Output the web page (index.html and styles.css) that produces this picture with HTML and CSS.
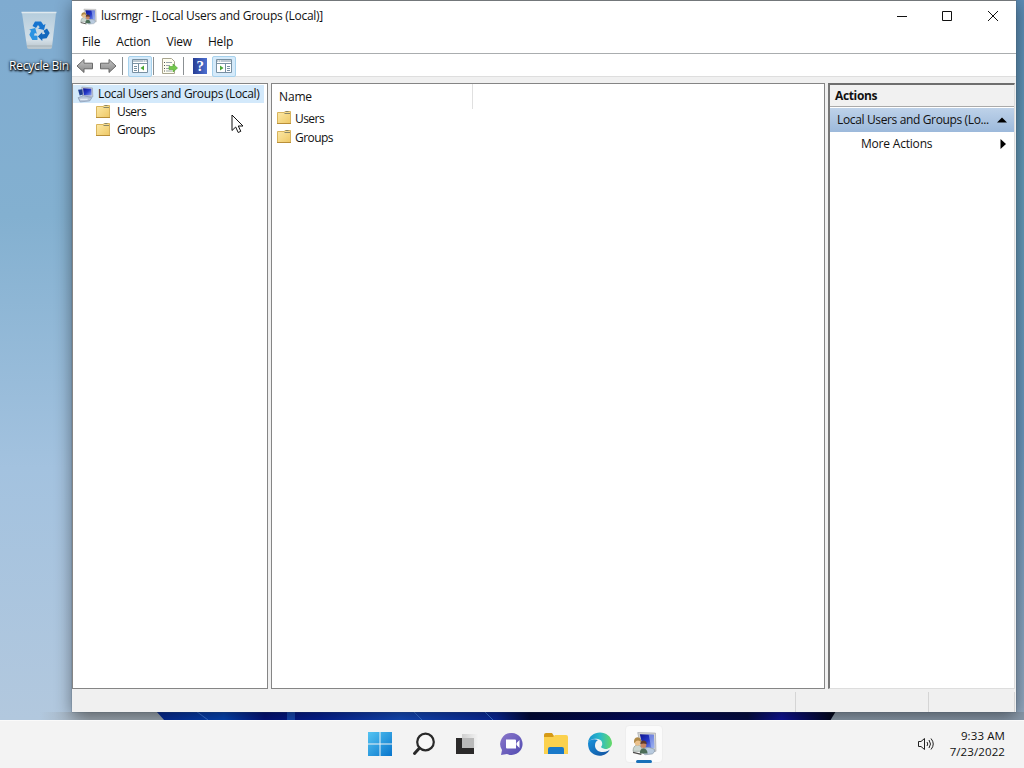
FILE: index.html
```html
<!DOCTYPE html>
<html lang="en">
<head>
<meta charset="utf-8">
<title>lusrmgr</title>
<link rel="stylesheet" href="styles.css">
</head>
<body>
<svg class="defs" width="0" height="0" aria-hidden="true">
  <defs>
    <linearGradient id="fold" x1="0" y1="0" x2="1" y2="1"><stop offset="0" stop-color="#fdeaa8"/><stop offset="1" stop-color="#eec866"/></linearGradient>
    <linearGradient id="scr" x1="0" y1="0" x2="1" y2="1"><stop offset="0" stop-color="#10158f"/><stop offset=".5" stop-color="#2438c8"/><stop offset="1" stop-color="#8fa6ee"/></linearGradient>
    <linearGradient id="gr" x1="0" y1="0" x2="0" y2="1"><stop offset="0" stop-color="#c4c4c4"/><stop offset="1" stop-color="#868686"/></linearGradient>
    <linearGradient id="win" gradientUnits="userSpaceOnUse" x1="0" y1="0" x2="24" y2="24"><stop offset="0" stop-color="#55c4f2"/><stop offset="1" stop-color="#0875cc"/></linearGradient>
    <symbol id="folder" viewBox="0 0 16 16">
      <path d="M1.500 2.500h6.500l1.500-1h5v12h-13z" fill="url(#fold)" stroke="#d8b45d"/>
      <path d="M8.500 3.500h5.500M9.500 1.500h3" stroke="#8b8869" fill="none"/>
      <path d="M1 13.500h14" stroke="#b98f38"/>
    </symbol>
    <symbol id="people" viewBox="0 0 24 24">
      <path d="M5.500 1.500L22.500 2l.500 17.500-14-1z" fill="#d8d8d3" stroke="#9a9ca3" stroke-width=".6"/>
      <path d="M7.500 3L21 3.500l.5 13-11-1z" fill="url(#scr)"/>
      <path d="M16 3.300l5 .2.500 13-3-.3z" fill="#a9bcf2" opacity=".6"/>
      <path d="M9 20q4-5 8-4l4.500 1.500q1 3-2 4.500l-7 .8z" fill="#b9cbdf" stroke="#8593a3" stroke-width=".6"/>
      <path d="M1 19.500q0-5.500 4-6 4.500 0 5 6z" fill="#ccd6d0" stroke="#71827b" stroke-width=".5"/>
      <path d="M1 20.500l8 2" stroke="#4c4a48" stroke-width="1.300"/>
      <ellipse cx="5.300" cy="10.700" rx="2.700" ry="3.400" fill="#eac18c"/>
      <path d="M2 12q-.8-5.500 3.300-6 4 .2 3.500 5-2-3-4.800-1.500z" fill="#b08a48"/>
      <path d="M7.500 21.500q0-4.500 3.500-5 3.500.2 4 5z" fill="#4c6e58"/>
      <circle cx="11" cy="13.500" r="2.800" fill="#c88762"/>
      <path d="M8 12.500q0-3.500 3-3.500t3.200 3.500q-3-1-6.200 0z" fill="#603a2b"/>
    </symbol>
    <symbol id="computer" viewBox="0 0 16 16">
      <path d="M4.500 1l10 .8.400 8.400-9.500-.2z" fill="#d0d3da" stroke="#9199aa" stroke-width=".6"/>
      <path d="M5.700 2l7.800.7.300 6.300-7.400-.3z" fill="url(#scr)"/>
      <path d="M1 3.500l4-.5.500 5-3 1z" fill="#203f91"/>
      <path d="M1 11l5-2 8 2-2 3-9 1z" fill="#b6c4d7" stroke="#8094b0" stroke-width=".6"/>
      <path d="M3 12.500h7" stroke="#eef4fb"/>
    </symbol>
    <symbol id="arrow" viewBox="0 0 18 16">
      <path d="M1 8l7-6.500v3.700h8.500v5.600H8v3.700z" fill="url(#gr)" stroke="#696969"/>
    </symbol>
    <symbol id="panel" viewBox="0 0 18 16">
      <path d="M1.500 1.500h15v13h-15z" fill="#fff" stroke="#7890a2"/>
      <path d="M2 3h14M2 5.500h14" stroke="#7c94a5"/>
      <path d="M12 3h1M14 3h1" stroke="#fff"/>
      <path d="M7.500 6v8.500M3 8.500h3M3 10.500h3M3 12.500h3" stroke="#7890a2"/>
      <path d="M13 7.500v5L9.500 10z" fill="#48a832"/>
    </symbol>
  </defs>
</svg>
<div class="desktop">
  <svg class="bloom" width="690" height="10" viewBox="0 0 690 10">
    <defs><linearGradient id="blm"><stop offset="0" stop-color="#082c98"/><stop offset=".1" stop-color="#0748bb"/><stop offset=".16" stop-color="#051480"/><stop offset=".24" stop-color="#06229b"/><stop offset=".36" stop-color="#164fc4"/><stop offset=".5" stop-color="#0b2aa0"/><stop offset=".55" stop-color="#020a3c"/><stop offset=".72" stop-color="#030b68"/><stop offset=".87" stop-color="#060e46"/><stop offset=".92" stop-color="#1115a0"/><stop offset="1" stop-color="#020715"/></linearGradient></defs>
    <path d="M0 0h680l-6 10H9z" fill="url(#blm)"/>
    <path d="M40 0l12 9M257 0l9 9M328 0l9 9" stroke="#3b77dc"/>
    <path d="M131 0h8v9h-8z" fill="#184bb9"/>
  </svg>
  <div class="shortcut">
    <svg width="40" height="44" viewBox="0 0 40 44">
      <defs><linearGradient id="bin" x1="0" y1="0" x2="0" y2="1"><stop offset="0" stop-color="#b5cddd"/><stop offset=".75" stop-color="#d3dfe7"/><stop offset="1" stop-color="#b7c3ca"/></linearGradient></defs>
      <path d="M3 5h34l-4 34q0 2-2 2H10q-2 0-2-2z" fill="url(#bin)"/>
      <path d="M2.500 4.500h35" stroke="#dfe9ef" stroke-width="1.500"/>
      <path d="M8 38h25" stroke="#9fa9ae" stroke-width=".8"/>
      <g transform="translate(20 23.500)">
        <path d="M-6.500-5.500L-4-10h6l2.500 3.500 2-1-1.500 6-6-1.500 1.800-1.300L-1-6.500-3-3.500z" fill="#1674cf"/>
        <path d="M-6.500-5.500L-4-10h6l2.500 3.500 2-1-1.500 6-6-1.500 1.800-1.300L-1-6.500-3-3.500z" transform="rotate(120)" fill="#1268bd"/>
        <path d="M-6.500-5.500L-4-10h6l2.500 3.500 2-1-1.500 6-6-1.500 1.800-1.300L-1-6.500-3-3.500z" transform="rotate(240)" fill="#2b93e2"/>
      </g>
    </svg>
    <span class="shortcut-label">Recycle Bin</span>
  </div>

  <main class="window">
    <header class="titlebar">
      <svg width="17" height="17"><use href="#people"/></svg>
      <span class="title">lusrmgr - [Local Users and Groups (Local)]</span>
      <svg class="controls" width="104" height="14" viewBox="0 0 104 14" fill="none" stroke="#111">
        <path d="M1 7.500h10M46.500 2.500h9v9h-9zM92 2l10 10M102 2L92 12"/>
      </svg>
    </header>
    <nav class="menu"><span>File</span><span>Action</span><span>View</span><span>Help</span></nav>
    <div class="toolbar">
      <svg width="18" height="16"><use href="#arrow"/></svg>
      <svg class="forward" width="18" height="16"><use href="#arrow"/></svg>
      <i class="sep"></i>
      <b class="pressed"><svg width="18" height="16"><use href="#panel"/></svg></b>
      <i class="sep near"></i>
      <svg class="export" width="17" height="18" viewBox="0 0 17 18">
        <path d="M1.500 1.500h9l3 3v12h-12z" fill="#fffef0" stroke="#a8a58e"/>
        <path d="M3 5.500h1M3 8.500h1M3 11.500h1M3 14h1" stroke="#555"/><path d="M5 5.500h6M5 8.500h4M5 11.500h3M5 14h6" stroke="#9aa5ac"/>
        <path d="M8 9.500h4V7l4.500 4-4.500 4v-2.500H8z" fill="#75c84c" stroke="#4aa22f" stroke-width=".6"/>
      </svg>
      <i class="sep"></i>
      <span class="help">?</span>
      <b class="pressed"><svg class="flip" width="18" height="16"><use href="#panel"/></svg></b>
    </div>
    <div class="panes">
      <section class="tree">
        <div class="node root"><svg width="17" height="17"><use href="#computer"/></svg><span>Local Users and Groups (Local)</span></div>
        <div class="node child"><svg width="16" height="16"><use href="#folder"/></svg><span>Users</span></div>
        <div class="node child"><svg width="16" height="16"><use href="#folder"/></svg><span>Groups</span></div>
      </section>
      <section class="list">
        <div class="column">Name</div>
        <div class="row"><svg width="16" height="16"><use href="#folder"/></svg><span>Users</span></div>
        <div class="row"><svg width="16" height="16"><use href="#folder"/></svg><span>Groups</span></div>
      </section>
      <aside class="actions">
        <h2>Actions</h2>
        <div class="group"><span>Local Users and Groups (Lo...</span><svg width="10" height="6" viewBox="0 0 10 6"><path d="M0 5.500L5 .5l5 5z"/></svg></div>
        <div class="more"><span>More Actions</span><svg width="6" height="10" viewBox="0 0 6 10"><path d="M.5 0l5.500 5-5.500 5z"/></svg></div>
      </aside>
    </div>
    <footer class="status"><i class="wide"></i><i class="mid"></i><i class="end"></i></footer>
  </main>
  <svg class="cursor" width="13" height="20" viewBox="0 0 13 20"><path d="M1 1v15.500l3.700-3.500 2.500 5.500 2.600-1.200-2.500-5.300H12z" fill="#fff" stroke="#111"/></svg>
</div>

<footer class="taskbar">
  <div class="apps">
    <svg width="24" height="24" viewBox="0 0 24 24"><path d="M0 0h11.500v11.500H0zM12.500 0H24v11.500H12.500zM0 12.500h11.500V24H0zM12.500 12.500H24V24H12.500z" fill="url(#win)"/></svg>
    <svg width="24" height="24" viewBox="0 0 24 24" fill="none" stroke="#292929"><circle cx="13.500" cy="10" r="8.300" fill="#f7f7f7" stroke-width="2.200"/><path d="M7.500 16L2.500 21.500" stroke-width="3" stroke-linecap="round"/></svg>
    <svg width="24" height="24" viewBox="0 0 24 24"><defs><linearGradient id="tv"><stop offset="0" stop-color="#d0d0d0"/><stop offset="1" stop-color="#f5f5f5"/></linearGradient></defs><path d="M0 6h18v16H0z" fill="#2b2929"/><path d="M6 2h17v14H6z" fill="url(#tv)"/><path d="M6 6h12v10H6z" fill="#b9b9b9"/></svg>
    <svg width="24" height="24" viewBox="0 0 24 24"><defs><linearGradient id="chat" x2="1" y2="1"><stop offset="0" stop-color="#8b77ca"/><stop offset="1" stop-color="#514bb1"/></linearGradient></defs><path d="M12 1a11 11 0 1 1-5 21L1 23l1-5A11 11 0 0 1 12 1z" fill="url(#chat)"/><path d="M6 7.500h9q1 0 1 1v8H7q-1 0-1-1zM16.500 11l3-3v8l-3-3z" fill="#fff"/></svg>
    <svg width="26" height="24" viewBox="0 0 26 24"><path d="M1 3q0-2 2-2h6l2 3v7H1z" fill="#d69a16"/><path d="M1 5h9l2-2h11q2 0 2 2v17H1z" fill="#fbd14e"/><path d="M5 22v-5q0-2 2-2h12q2 0 2 2v5z" fill="#1979c9"/></svg>
    <svg width="26" height="24" viewBox="0 0 26 24"><defs><linearGradient id="eg"><stop offset="0" stop-color="#188fcf"/><stop offset=".5" stop-color="#2bbac7"/><stop offset="1" stop-color="#66d965"/></linearGradient><linearGradient id="eb" x2="1" y2="1"><stop offset="0" stop-color="#1793dc"/><stop offset="1" stop-color="#124e9c"/></linearGradient></defs><path d="M1 11C2-3 24-3 25 11c0 6-8 8-11 4 2-2 2-7-3-8C6 6 2 8 1 11z" fill="url(#eg)"/><path d="M1 11c1-3 5-5 10-3-5 3-4 12 5 12 3 0 5-1 7-3-3 7-12 9-18 4-3-2-4-6-4-10z" fill="url(#eb)"/><path d="M11 9q3-1 3.500 2 0 2-1.500 4 3 3 9 1.500 1 .5 1 1-4 3-9 .5-4-3-3-9z" fill="#eef4f5"/></svg>
    <div class="active"><svg width="25" height="25"><use href="#people"/></svg></div>
  </div>
  <svg class="sound" width="18" height="16" viewBox="0 0 18 16" fill="none" stroke="#222"><path d="M1.500 5.500h2.500l3.500-3v11l-3.500-3H1.500zM10 6q1.500 2 0 4M12 4q3 4 0 8M14 2.500q4.500 5.500 0 11"/></svg>
  <div class="clock"><div>9:33 AM</div><div>7/23/2022</div></div>
</footer>
</body>
</html>
```
FILE: styles.css
```css
* { box-sizing: border-box; }
body { margin: 0; width: 1024px; height: 768px; overflow: hidden; font: 12px/18px "Open Sans", "Noto Sans", sans-serif; letter-spacing: -.27px; color: #111; }
svg { display: block; flex: none; }
.defs { position: absolute; }
.desktop { position: relative; height: 720px; background: linear-gradient(180deg, #7fabd0 0%, #83b0d0 30%, #a3c2df 65%, #b2c8de 100%); overflow: hidden; }
.desktop::before { content: ""; position: absolute; right: 0; top: 0; width: 40px; height: 720px; background: linear-gradient(#5c8cb5, #639ab8 25%, #6b96bc 60%, #94a9c0); }
.desktop::after { content: ""; position: absolute; left: 40px; right: 0; top: 712px; height: 8px; background: linear-gradient(90deg, transparent, #a0abb5 5%, #8999aa); }
.bloom { position: absolute; left: 156px; top: 711px; z-index: 1; }
.shortcut { position: absolute; left: 0; top: 8px; width: 78px; }
.shortcut svg { margin-left: 19px; }
.shortcut-label { display: block; margin: 5px 0 0 9px; color: #fff; letter-spacing: -.25px; text-shadow: 0 1px 2px #000, 1px 1px 2px #000, 0 0 3px #234; white-space: nowrap; }
.window { position: absolute; z-index: 2; left: 72px; top: 0; width: 944px; height: 712px; display: flex; flex-direction: column; background: #f0f0f0; border-top: 1px solid #73777a; box-shadow: 0 0 1px #456, 0 4px 16px rgba(0,0,0,.45); }
.titlebar { display: flex; align-items: center; height: 30px; padding-left: 8px; background: #fff; }
.title { margin-left: 4px; }
.controls { margin: 0 16px 0 auto; }
.menu { display: flex; gap: 16px; height: 22px; padding: 2px 10px; background: #fff; letter-spacing: -.18px; }
.toolbar { display: flex; align-items: center; height: 24px; padding: 2px 4px 0; background: #fff; border-top: 1px solid #aaadaf; border-bottom: 1px solid #dedede; }
.forward { margin-left: 5px; }
.forward, .flip { transform: scaleX(-1); }
.sep { width: 1px; height: 18px; margin: 0 5px; background: #8b9093; }
.sep.near { margin: 0 2px 0 1px; }
.pressed { display: flex; justify-content: center; align-items: center; width: 24px; height: 21px; background: #d5eafa; border: 1px solid #a7d2ed; border-radius: 2px; }
.export { margin: 0 1px 0 5px; }
.export + .sep { margin-left: 4px; }
.help { width: 14px; height: 16px; margin: 0 5px 0 4px; background: linear-gradient(90deg, #263d94, #4e70d1); color: #fff; font: bold 15px/16px "Liberation Serif", serif; text-align: center; }
.panes { display: flex; width: 943px; height: 606px; margin-top: 6px; }
.tree { width: 196px; margin-right: 3px; padding-top: 1px; background: #fff; border: 1px solid #858585; }
.node { display: flex; align-items: center; height: 18px; }
.root { width: 191px; padding-left: 4px; background: #d3e9fb; letter-spacing: -.35px; white-space: nowrap; }
.root span { margin-left: 4px; }
.child { padding-left: 22px; }
.child span { margin-left: 6px; }
.child span, .row span { letter-spacing: -.55px; }
.list { width: 554px; margin-right: 3px; background: #fff; border: 1px solid #858585; }
.column { width: 201px; height: 25px; padding: 4px 7px; border-right: 1px solid #e0e0e0; letter-spacing: -.15px; }
.row { display: flex; align-items: center; height: 19px; padding-left: 4px; }
.row svg { margin-top: -1px; }
.row span { margin: 0 0 0 3px; }
.actions { width: 187px; background: #fff; border: 1px solid #ddd; border-left: 2px solid #777; border-top: 2px solid #6e6e6e; }
.actions h2 { height: 22px; margin: 0; padding: 2px 5px; background: #f1f1f1; border-bottom: 1px solid #aaa; font-size: 12px; line-height: 18px; letter-spacing: -.35px; }
.group { display: flex; align-items: center; height: 25px; padding: 0 7px; background: linear-gradient(#bed2e9, #9cb9db); border-top: 1px solid #fff; letter-spacing: -.36px; }
.group svg, .more svg { margin-left: auto; }
.more { display: flex; align-items: center; height: 23px; padding: 0 8px 0 31px; letter-spacing: -.2px; }
.status { display: flex; flex: 1; padding-top: 3px; }
.status i { border-right: 1px solid #d5d5d5; }
.wide { width: 724px; }
.mid { width: 133px; }
.end { width: 86px; }
.cursor { position: absolute; z-index: 3; left: 231px; top: 114px; }
.taskbar { display: flex; align-items: center; height: 48px; padding-bottom: 2px; background: #f3f3f3; border-top: 1px solid #fafafa; }
.apps { display: flex; align-items: center; gap: 20px; margin-left: 368px; }
.apps > svg:nth-child(n+5) { margin-left: -1px; margin-right: -1px; }
.active { display: flex; justify-content: center; align-items: center; position: relative; width: 38px; height: 38px; margin-left: -7px; background: #fbfbfb; border: 1px solid #eee; border-radius: 4px; }
.active::after { content: ""; position: absolute; left: 10px; bottom: -1px; width: 16px; height: 3px; border-radius: 2px; background: #1870b8; }
.sound { margin: 0 0 0 auto; }
.clock { width: 71px; margin: 1px 19px 0 -1px; font-size: 11.5px; line-height: 16px; letter-spacing: .1px; text-align: right; }
```
